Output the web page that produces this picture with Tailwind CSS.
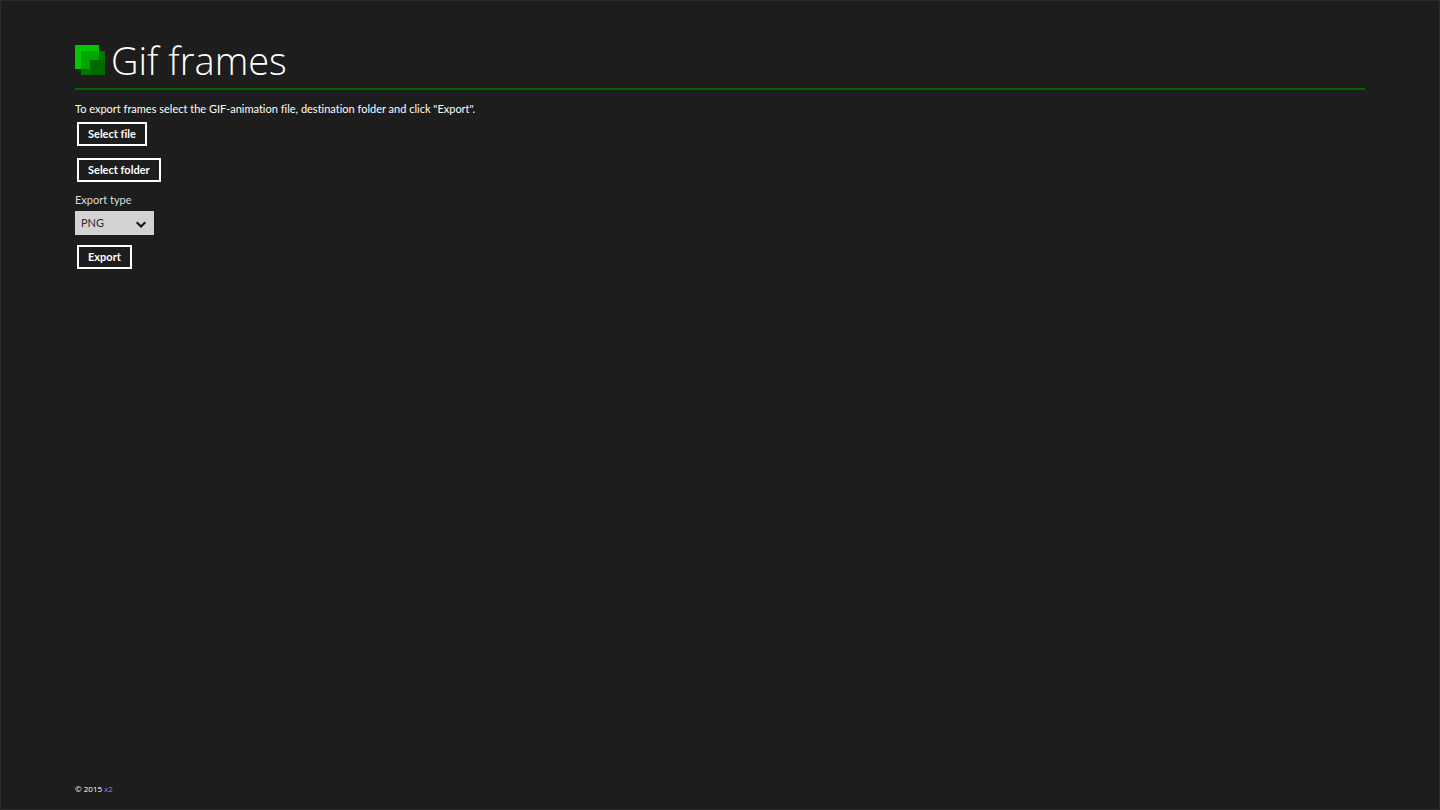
<!DOCTYPE html>
<html lang="en">
<head>
    <meta charset="UTF-8">
    <meta name="viewport" content="width=device-width, initial-scale=1.0">
    <title>Gif frames</title>
    <script src="https://cdn.jsdelivr.net/npm/@tailwindcss/browser@4"></script>
</head>
<body class="flex flex-col min-h-screen bg-[#1d1d1d] border border-[#2b2b2b] px-[74px] text-white text-[11px] leading-4 font-['Lato','Noto_Sans',sans-serif] [font-variant-ligatures:none]">
<header class="flex items-center gap-[6px] h-[89px] pt-[31px] border-b-2 border-[#006400]">
    <svg class="size-[30px]" viewBox="0 0 30 30" aria-hidden="true" shape-rendering="crispEdges">
        <rect width="24" height="24" fill="#00c800"/>
        <rect x="6" y="6" width="24" height="24" fill="#007800"/>
        <rect x="6" y="6" width="18" height="18" fill="#00a500"/>
        <rect x="15" y="15" width="15" height="15" fill="#006c00"/>
    </svg>
    <h1 class="text-[38px] leading-[60px] font-light font-['Open_Sans','Noto_Sans',sans-serif]">Gif frames</h1>
</header>
<main class="flex flex-col items-start grow pt-[11px]">
    <p>To export frames select the GIF-animation file, destination folder and click "Export".</p>
    <button type="button" class="h-6 mx-[2px] mt-[5px] px-[9px] border-2 border-white font-bold leading-5 hover:bg-white/20">Select file</button>
    <button type="button" class="h-6 mx-[2px] mt-3 px-[9px] border-2 border-white font-bold leading-5 hover:bg-white/20">Select folder</button>
    <label for="exportType" class="mt-[10px] text-[#dedede]">Export type</label>
    <div class="relative mt-[3px]">
        <select id="exportType" class="block appearance-none w-[79px] h-6 pl-[6px] pr-6 bg-[#d3d3d3] text-[#2b2b2b]">
            <option>PNG</option>
            <option>JPEG</option>
            <option>BMP</option>
        </select>
        <svg class="absolute right-2 top-[9px] w-[10px] h-[9px] pointer-events-none" viewBox="0 0 10 9" fill="none" stroke="#111" stroke-width="2" aria-hidden="true">
            <path d="M0.7 2.2 5 6.5 9.3 2.2"/>
        </svg>
    </div>
    <button type="button" class="h-6 mx-[2px] mt-[10px] px-[9px] border-2 border-white font-bold leading-5 hover:bg-white/20">Export</button>
</main>
<footer class="pb-3 text-[8px] leading-4 font-['Open_Sans','Noto_Sans',sans-serif]">&copy; 2015 <a href="#" class="text-[#9673ff]">x2</a></footer>
</body>
</html>
